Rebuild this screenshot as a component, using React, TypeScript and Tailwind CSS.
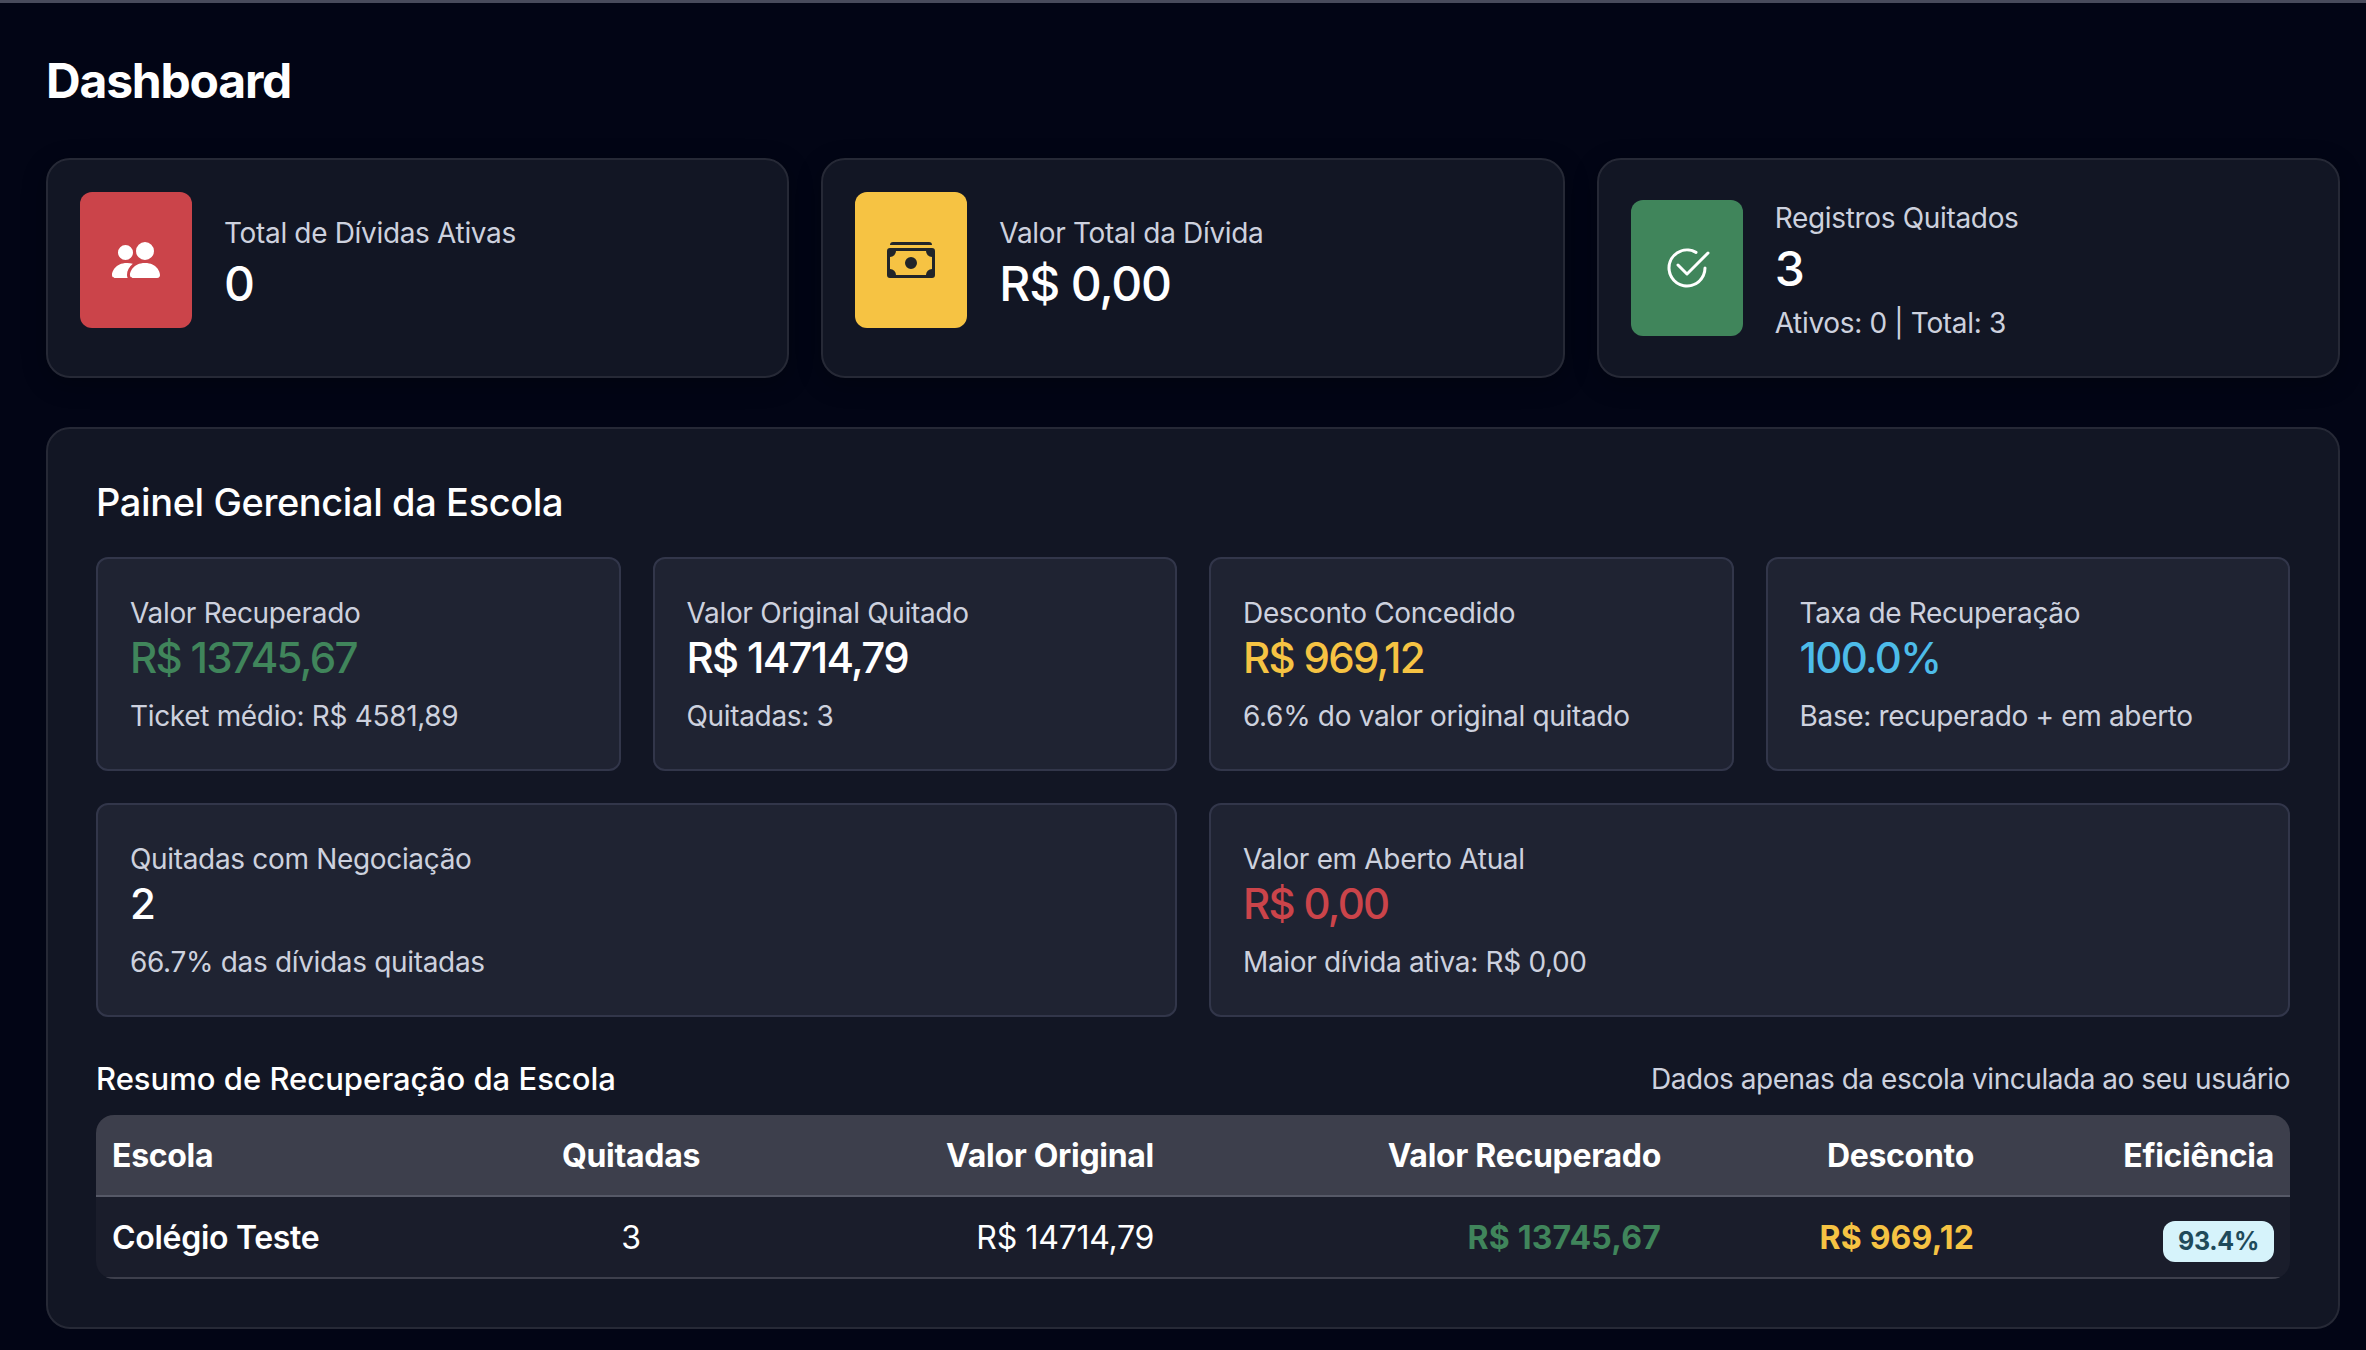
import { BsPeopleFill, BsCashStack, BsCheck2Circle } from 'react-icons/bs'
import type { ReactNode } from 'react'

function StatCard({ icon, iconBg, label, value, note }: { icon: ReactNode; iconBg: string; label: string; value: string; note?: string }) {
  return (
    <div className="h-[220px] px-[32px] pt-[32px] rounded-[24px] border-2 border-[#262936] bg-[#121624] shadow-[0_6px_24px_rgba(0,0,0,0.25)]">
      <div className="flex items-center gap-[32px]">
        <div className={`flex items-center justify-center w-[112px] h-[136px] rounded-[12px] shrink-0 ${iconBg}`}>{icon}</div>
        <div className={note ? 'pt-[6px] pb-[1px]' : ''}>
          <div className="text-[28px] leading-[40px] tracking-[-0.33px] text-[#cdd1de]">{label}</div>
          <div className="text-[48px] leading-[48px] mt-[7px] tracking-[-1.2px] font-medium text-white">{value}</div>
          {note && <div className="text-[28px] leading-[40px] mt-[10px] tracking-[-0.33px] text-[#cdd1de]">{note}</div>}
        </div>
      </div>
    </div>
  )
}

function MetricCard({ label, value, valueColor, note }: { label: string; value: string; valueColor: string; note: string }) {
  return (
    <div className="h-[214px] px-[32px] pt-[36px] rounded-[12px] border-2 border-[#32364a] bg-[#1f2332]">
      <div className="text-[28px] leading-[36px] tracking-[-0.33px] text-[#cdd1de]">{label}</div>
      <div className={`text-[42px] leading-[50px] mt-[2px] tracking-[-1.7px] font-medium ${valueColor}`}>{value}</div>
      <div className="text-[28px] leading-[40px] mt-[13px] tracking-[-0.33px] text-[#cdd1de]">{note}</div>
    </div>
  )
}

export default function App() {
  return (
    <div className="h-[1350px] overflow-hidden bg-[#020515] border-t-[3px] border-[#484b5c] pl-[46px] pr-[26px] font-['Inter',sans-serif] text-white">
      <h1 className="text-[48px] leading-[58px] font-bold tracking-[-1.2px] mt-[49px]">Dashboard</h1>

      <div className="grid grid-cols-3 gap-[32px] mt-[48px]">
        <StatCard icon={<BsPeopleFill size={48} className="text-white" />} iconBg="bg-[#cb444a]" label="Total de Dívidas Ativas" value="0" />
        <StatCard icon={<BsCashStack size={48} className="text-[#212529]" />} iconBg="bg-[#f6c343]" label="Valor Total da Dívida" value="R$ 0,00" />
        <StatCard icon={<BsCheck2Circle size={48} className="text-white" />} iconBg="bg-[#40855b]" label="Registros Quitados" value="3" note="Ativos: 0 | Total: 3" />
      </div>

      <div className="mt-[49px] h-[902px] px-[48px] pt-[48px] rounded-[24px] border-2 border-[#262936] bg-[#121624]">
        <h2 className="text-[38px] leading-[50px] tracking-[-0.4px] font-medium">Painel Gerencial da Escola</h2>

        <div className="grid grid-cols-4 gap-[32px] mt-[30px]">
          <MetricCard label="Valor Recuperado" value="R$ 13745,67" valueColor="text-[#40855b]" note="Ticket médio: R$ 4581,89" />
          <MetricCard label="Valor Original Quitado" value="R$ 14714,79" valueColor="text-white" note="Quitadas: 3" />
          <MetricCard label="Desconto Concedido" value="R$ 969,12" valueColor="text-[#f6c343]" note="6.6% do valor original quitado" />
          <MetricCard label="Taxa de Recuperação" value="100.0%" valueColor="text-[#4dbce9]" note="Base: recuperado + em aberto" />
        </div>

        <div className="grid grid-cols-2 gap-[32px] mt-[32px]">
          <MetricCard label="Quitadas com Negociação" value="2" valueColor="text-white" note="66.7% das dívidas quitadas" />
          <MetricCard label="Valor em Aberto Atual" value="R$ 0,00" valueColor="text-[#cb444a]" note="Maior dívida ativa: R$ 0,00" />
        </div>

        <div className="flex items-center justify-between mt-[40px] h-[44px]">
          <h3 className="text-[31px] font-medium">Resumo de Recuperação da Escola</h3>
          <span className="text-[28px] tracking-[-0.46px] text-[#cdd1de]">Dados apenas da escola vinculada ao seu usuário</span>
        </div>

        <div className="mt-[14px] rounded-[18px] overflow-hidden">
          <table className="w-full table-fixed border-collapse text-[32px] tracking-[-0.3px]">
            <thead>
              <tr className="h-[81px] bg-[#3d3f4c] border-b-2 border-[#565967]">
                <th className="w-[404px] px-[16px] pt-[2px] text-left font-bold">Escola</th>
                <th className="w-[262px] px-[16px] pt-[2px] text-center font-bold">Quitadas</th>
                <th className="w-[408px] px-[16px] pt-[2px] text-right font-bold">Valor Original</th>
                <th className="w-[507px] px-[16px] pt-[2px] text-right font-bold">Valor Recuperado</th>
                <th className="w-[313px] px-[16px] pt-[2px] text-right font-bold">Desconto</th>
                <th className="px-[16px] pt-[2px] text-right font-bold">Eficiência</th>
              </tr>
            </thead>
            <tbody>
              <tr className="h-[82px] bg-[#1a1d2b] border-b-2 border-[#3d3f4c]">
                <td className="px-[16px] pt-[2px] font-semibold">Colégio Teste</td>
                <td className="px-[16px] pt-[2px] text-center">3</td>
                <td className="px-[16px] pt-[2px] text-right">R$ 14714,79</td>
                <td className="px-[16px] pt-[2px] text-right font-bold tracking-[0.2px] text-[#40855b]">R$ 13745,67</td>
                <td className="px-[16px] pt-[2px] text-right font-bold tracking-[0.2px] text-[#f6c343]">R$ 969,12</td>
                <td className="px-[16px] text-right">
                  <span className="inline-block align-middle mt-[6px] px-[15px] py-[4px] leading-[33px] rounded-[12px] bg-[#d6f3fb] text-[#1f4a5a] text-[25px] font-bold">93.4%</span>
                </td>
              </tr>
            </tbody>
          </table>
        </div>
      </div>
    </div>
  )
}
